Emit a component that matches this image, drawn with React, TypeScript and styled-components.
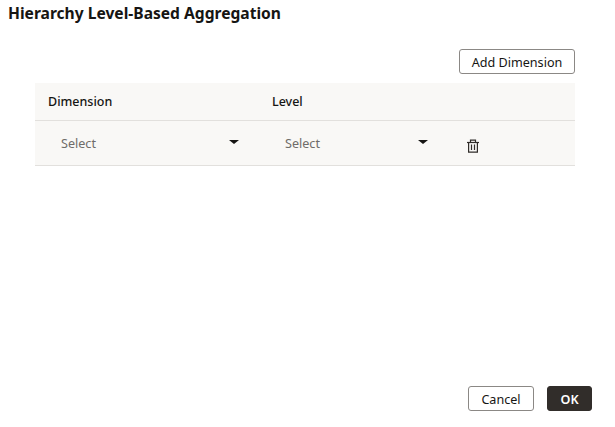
import { createGlobalStyle } from "styled-components";
import styled from "styled-components";

const GlobalStyle = createGlobalStyle`
  html, body {
    margin: 0;
    padding: 0;
    background: #fff;
    font-family: "Noto Sans", "Open Sans", sans-serif;
    color: #161513;
  }
`;

const Dialog = styled.div`
  width: 615px;
  height: 427px;
  box-sizing: border-box;
  display: flex;
  flex-direction: column;
  overflow: hidden;
`;

const Title = styled.h1`
  margin: 0;
  padding: 3px 8px 0;
  height: 21px;
  line-height: 21px;
  font-size: 15.6px;
  font-weight: 700;
`;

const Body = styled.div`
  flex: 1;
  display: flex;
  flex-direction: column;
  padding: 25px 40px 0 35px;
`;

const Toolbar = styled.div`
  display: flex;
  justify-content: flex-end;
  margin-bottom: 9px;
`;

const Button = styled.button<{ $primary?: boolean; $width: number }>`
  width: ${(p) => p.$width}px;
  height: 25px;
  padding: 1px 0 0;
  box-sizing: border-box;
  border-radius: 3px;
  border: 1px solid ${(p) => (p.$primary ? "#312d2a" : "#8b8885")};
  background: ${(p) => (p.$primary ? "#312d2a" : "#fff")};
  color: ${(p) => (p.$primary ? "#fff" : "#161513")};
  font-family: inherit;
  font-size: 12.6px;
  font-weight: ${(p) => (p.$primary ? 600 : 400)};
`;

const Row = styled.div<{ $header?: boolean }>`
  display: grid;
  grid-template-columns: 224px 188px 1fr;
  height: ${(p) => (p.$header ? 38 : 45)}px;
  box-sizing: border-box;
  background: #f9f8f6;
  border-bottom: 1px solid #e2e0dd;
  align-items: center;
`;

const HeadCell = styled.div`
  padding-left: 13px;
  font-size: 12.5px;
  font-weight: 500;
  color: #161513;
`;

const SelectCell = styled.div<{ $width: number }>`
  display: flex;
  align-items: center;
  justify-content: space-between;
  width: ${(p) => p.$width}px;
  padding-left: 26px;
  box-sizing: border-box;
  font-size: 12.6px;
  color: #6f6c69;
`;

const Caret = styled.span`
  width: 0;
  height: 0;
  border-left: 5px solid transparent;
  border-right: 5px solid transparent;
  border-top: 4.5px solid #161513;
  margin-top: -2px;
`;

const IconCell = styled.div`
  display: flex;
  padding-left: 19px;
  padding-top: 6px;
`;

const Footer = styled.div`
  display: flex;
  justify-content: flex-end;
  gap: 13px;
  padding: 0 23px 16px 0;
`;

function TrashIcon() {
  return (
    <svg width="14" height="14" viewBox="0 0 14 14" fill="none" stroke="#312d2a" strokeWidth="1.2">
      <path d="M1 3.5h12" />
      <path d="M4.5 3.2V1.2h5v2" />
      <path d="M2.6 3.5v9.7h8.8V3.5" />
      <path d="M5.5 5.5v5.5M8.5 5.5v5.5" />
    </svg>
  );
}

export default function App() {
  return (
    <Dialog>
      <GlobalStyle />
      <Title>Hierarchy Level-Based Aggregation</Title>
      <Body>
        <Toolbar>
          <Button $width={116}>Add Dimension</Button>
        </Toolbar>
        <Row $header>
          <HeadCell>Dimension</HeadCell>
          <HeadCell>Level</HeadCell>
        </Row>
        <Row>
          <SelectCell $width={204}>
            Select
            <Caret />
          </SelectCell>
          <SelectCell $width={169}>
            Select
            <Caret />
          </SelectCell>
          <IconCell>
            <TrashIcon />
          </IconCell>
        </Row>
      </Body>
      <Footer>
        <Button $width={66}>Cancel</Button>
        <Button $primary $width={45}>OK</Button>
      </Footer>
    </Dialog>
  );
}
